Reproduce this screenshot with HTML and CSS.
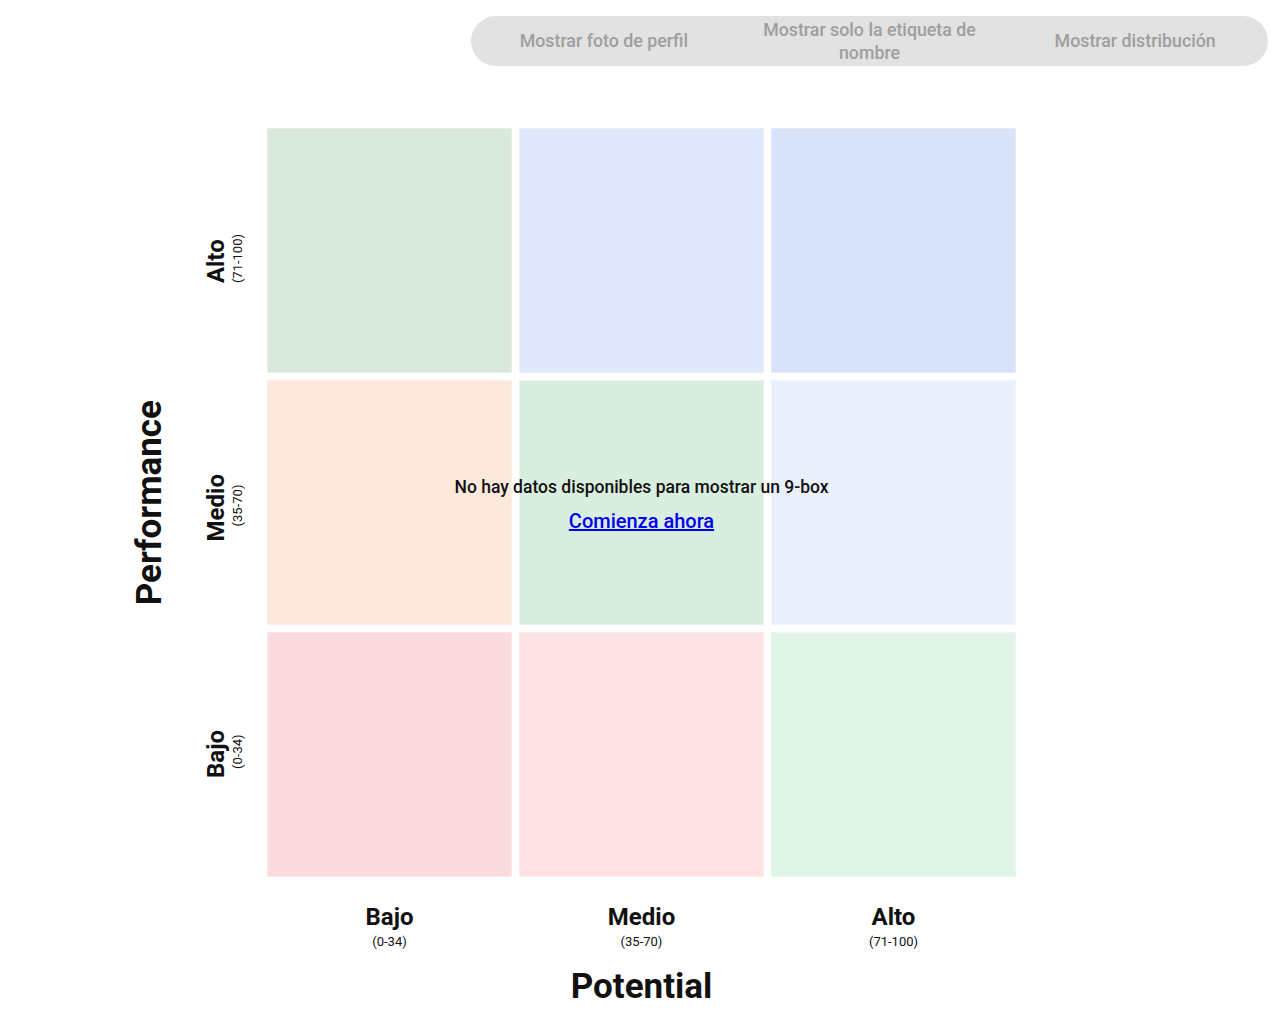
FILE: index.html
```html
<!DOCTYPE html>
<html lang="es">
<head>
<meta charset="utf-8">
<title>9-box</title>
<link rel="stylesheet" href="styles.css">
</head>
<body>
<div class="toolbar">
  <div class="pill">
    <div class="seg">Mostrar foto de perfil</div>
    <div class="seg">Mostrar solo la etiqueta de nombre</div>
    <div class="seg">Mostrar distribución</div>
  </div>
</div>

<div class="chart">
  <div class="y-title"><span class="vtext axis-title">Performance</span></div>
  <div class="y-labels">
    <div class="y-label"><div class="vtext"><div class="lvl">Alto</div><div class="rng">(71-100)</div></div></div>
    <div class="y-label"><div class="vtext"><div class="lvl">Medio</div><div class="rng">(35-70)</div></div></div>
    <div class="y-label"><div class="vtext"><div class="lvl">Bajo</div><div class="rng">(0-34)</div></div></div>
  </div>
  <div class="matrix-col">
    <div class="matrix">
      <div class="cell c-green"></div>
      <div class="cell c-blue1"></div>
      <div class="cell c-blue2"></div>
      <div class="cell c-peach"></div>
      <div class="cell c-green2"></div>
      <div class="cell c-blue3"></div>
      <div class="cell c-pink1"></div>
      <div class="cell c-pink2"></div>
      <div class="cell c-green3"></div>
      <div class="empty">
        <p class="empty-msg">No hay datos disponibles para mostrar un 9-box</p>
        <a class="empty-link" href="#">Comienza ahora</a>
      </div>
    </div>
    <div class="x-labels">
      <div class="x-label"><div class="lvl">Bajo</div><div class="rng">(0-34)</div></div>
      <div class="x-label"><div class="lvl">Medio</div><div class="rng">(35-70)</div></div>
      <div class="x-label"><div class="lvl">Alto</div><div class="rng">(71-100)</div></div>
    </div>
    <div class="x-title axis-title">Potential</div>
  </div>
</div>
</body>
</html>
```

FILE: styles.css
```css
* { box-sizing: border-box; }
html, body { margin: 0; padding: 0; background: #fff; }
body {
  font-family: Roboto, "Liberation Sans", sans-serif;
  color: #111;
  width: 1280px;
  height: 1017px;
  overflow: hidden;
}

.toolbar {
  display: flex;
  justify-content: flex-end;
  padding: 16px 12px 0 0;
}
.pill {
  width: 797px;
  height: 50px;
  border-radius: 25px;
  background: #e1e2e1;
  display: grid;
  grid-template-columns: repeat(3, 1fr);
  align-items: center;
}
.seg {
  text-align: center;
  color: #9e9e9e;
  font-size: 17.8px;
  font-weight: 500;
  line-height: 23px;
  padding: 0 16px;
  margin-top: -1px;
}

.chart {
  display: flex;
  margin: 62px 0 0 120px;
}
.y-title {
  width: 60px;
  height: 749px;
  display: flex;
  align-items: center;
  justify-content: center;
}
.vtext {
  writing-mode: vertical-rl;
  transform: rotate(180deg);
  text-align: center;
}
.axis-title {
  font-size: 35px;
  font-weight: 700;
  line-height: 40px;
}
.y-labels {
  width: 87px;
  display: grid;
  grid-template-rows: repeat(3, 246px);
  padding-top: 8px;
}
.y-label {
  display: flex;
  align-items: center;
  justify-content: center;
}
.lvl {
  font-size: 24px;
  font-weight: 700;
  line-height: 28px;
}
.rng {
  font-size: 13px;
  line-height: 15px;
}
.y-label .lvl { margin-bottom: 5px; }

.matrix-col { width: 749px; }
.matrix {
  position: relative;
  display: grid;
  grid-template-columns: repeat(3, 245px);
  grid-template-rows: repeat(3, 245px);
  gap: 7px;
}
.cell { border: 1px solid rgba(255,255,255,0.35); }
.c-green  { background: #d9eadd; }
.c-blue1  { background: #dfe9fb; }
.c-blue2  { background: #d8e3fa; }
.c-peach  { background: #fde9dc; }
.c-green2 { background: #d9eede; }
.c-blue3  { background: #e9f0fc; }
.c-pink1  { background: #fbdcde; }
.c-pink2  { background: #fde2e4; }
.c-green3 { background: #e1f4e8; }

.empty {
  position: absolute;
  inset: 0;
  display: flex;
  flex-direction: column;
  align-items: center;
  justify-content: center;
  gap: 10px;
  padding-top: 2px;
}
.empty-msg {
  margin: 0;
  font-size: 17.5px;
  font-weight: 500;
  line-height: 24px;
  color: #111;
}
.empty-link {
  font-size: 20px;
  font-weight: 500;
  line-height: 24px;
  color: #0000ee;
  text-decoration: underline;
}

.x-labels {
  display: grid;
  grid-template-columns: repeat(3, 245px);
  column-gap: 7px;
  padding-top: 26px;
}
.x-label {
  text-align: center;
}
.x-label .rng { margin-top: 3px; }
.x-title {
  text-align: center;
  margin-top: 18px;
}
```
